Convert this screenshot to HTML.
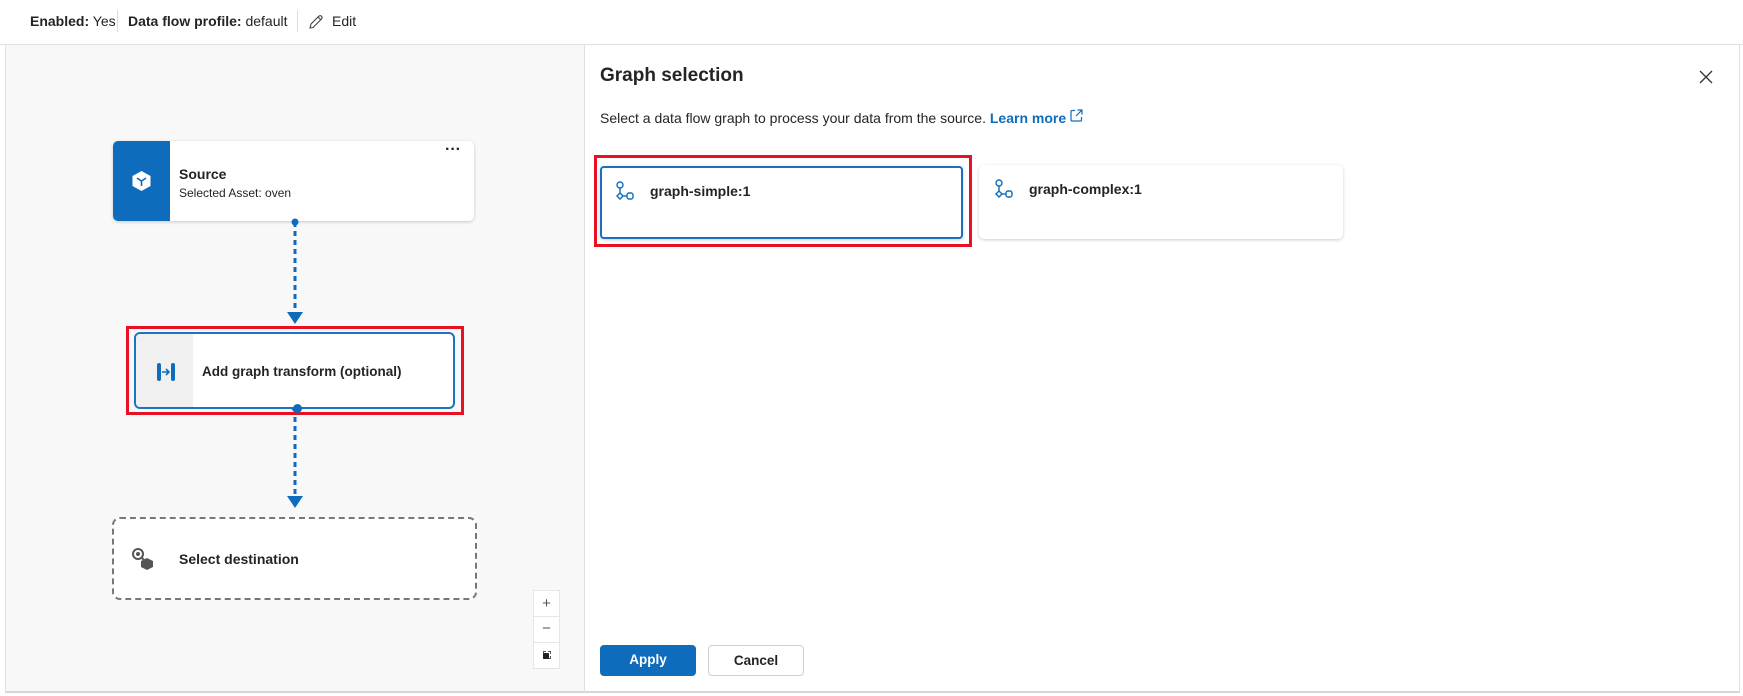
<!DOCTYPE html>
<html><head><meta charset="utf-8"><style>
*{box-sizing:border-box;margin:0;padding:0}
body{width:1743px;height:696px;background:#fff;font-family:"Liberation Sans",sans-serif;color:#242424;position:relative;overflow:hidden}
.abs{position:absolute}
.top{left:0;top:0;width:1743px;height:45px;border-bottom:1px solid #e0e0e0;font-size:14px}
.canvas{left:5px;top:45px;width:580px;height:648px;background:#f8f8f8;border-left:1px solid #e0e0e0;border-right:1px solid #e0e0e0;border-bottom:2px solid #d6d6d6}
.panel{left:585px;top:45px;width:1155px;height:648px;border-right:1px solid #e0e0e0;border-bottom:2px solid #d6d6d6}
.card{background:#fff;border-radius:5px;box-shadow:0 1px 3px rgba(0,0,0,.2)}
.btn{font-size:13.5px;font-weight:bold;border-radius:4px;text-align:center;line-height:30px}
</style></head><body>
<div class="abs top">
 <div class="abs" style="left:30px;top:13px"><b>Enabled:</b> Yes</div>
 <div class="abs" style="left:117px;top:10px;width:1px;height:22px;background:#ddd"></div>
 <div class="abs" style="left:128px;top:13px"><b>Data flow profile:</b> default</div>
 <div class="abs" style="left:297px;top:10px;width:1px;height:22px;background:#ddd"></div>
 <svg class="abs" style="left:307px;top:13px" width="18" height="18" viewBox="0 0 18 18"><path d="M3 15 L4 11 L12 3 Q14 2 15 4 Q15.5 5 14 6.5 L6 14.5 Z M11 4 L14 7" fill="none" stroke="#444" stroke-width="1.1"/></svg>
 <div class="abs" style="left:332px;top:13px">Edit</div>
</div>
<div class="abs canvas"></div>
<div class="abs card" style="left:113px;top:141px;width:361px;height:80px;overflow:hidden">
 <div class="abs" style="left:0;top:0;width:57px;height:80px;background:#0f6cbd"></div>
 <svg class="abs" style="left:18px;top:29px" width="21" height="22" viewBox="0 0 21 22"><path d="M10.5 1 L19.5 6 V16 L10.5 21 L1.5 16 V6 Z" fill="#fff"/><path d="M6 8 L10.5 11 L15 8 M10.5 11 V16" stroke="#0f6cbd" stroke-width="1.6" fill="none"/></svg>
 <div class="abs" style="left:66px;top:25px;font-size:14px;font-weight:bold">Source</div>
 <div class="abs" style="left:66px;top:45px;font-size:12px">Selected Asset: oven</div>
 <div class="abs" style="left:332px;top:0px;font-size:16px;font-weight:bold;letter-spacing:0px">···</div>
</div>
<svg class="abs" style="left:285px;top:216px" width="20" height="300" viewBox="0 0 20 300">
 <circle cx="10" cy="6" r="3.5" fill="#0f6cbd"/>
 <line x1="10" y1="6" x2="10" y2="100" stroke="#0f6cbd" stroke-width="3" stroke-dasharray="5,4"/>
 <path d="M2 96 L18 96 L10 108 Z" fill="#0f6cbd"/>
 <circle cx="10" cy="192" r="3.5" fill="#0f6cbd"/>
 <line x1="10" y1="192" x2="10" y2="282" stroke="#0f6cbd" stroke-width="3" stroke-dasharray="5,4"/>
 <path d="M2 280 L18 280 L10 292 Z" fill="#0f6cbd"/>
</svg>
<div class="abs" style="left:126px;top:326px;width:338px;height:89px;border:3px solid #e81123"></div>
<div class="abs" style="left:134px;top:332px;width:321px;height:77px;background:#fff;border:2px solid #1a73c4;border-radius:6px;overflow:hidden">
 <div class="abs" style="left:0;top:0;width:57px;height:77px;background:#f0f0f0"></div>
 <svg class="abs" style="left:20px;top:28px" width="22" height="20" viewBox="0 0 22 20"><rect x="1" y="1" width="4" height="18" rx="2" fill="#0f6cbd"/><rect x="15" y="1" width="4" height="18" rx="2" fill="#0f6cbd"/><path d="M6 10 H13 M10 7 L13 10 L10 13" stroke="#0f6cbd" stroke-width="1.6" fill="none"/></svg>
 <div class="abs" style="left:66px;top:30px;font-size:13.5px;font-weight:bold">Add graph transform (optional)</div>
</div>
<div class="abs" style="left:293px;top:404px;width:9px;height:9px;border-radius:50%;background:#0f6cbd"></div>
<div class="abs" style="left:112px;top:517px;width:365px;height:83px;background:#fff;border:2px dashed #777;border-radius:8px">
 <svg class="abs" style="left:17px;top:28px" width="24" height="24" viewBox="0 0 24 24"><circle cx="7" cy="7" r="5" fill="none" stroke="#555" stroke-width="2"/><circle cx="7" cy="7" r="2" fill="#555"/><path d="M10 10 L13 13" stroke="#555" stroke-width="2"/><path d="M16 11 L22 14 V20 L16 23 L10 20 V14 Z" fill="#555"/></svg>
 <div class="abs" style="left:65px;top:32px;font-size:14px;font-weight:bold">Select destination</div>
</div>
<div class="abs" style="left:533px;top:590px;width:27px;height:79px;background:#fff;border:1px solid #e6e6e6;font-size:15px;color:#555;text-align:center">
 <div style="height:26px;line-height:26px;border-bottom:1px solid #e6e6e6">+</div>
 <div style="height:26px;line-height:24px;border-bottom:1px solid #e6e6e6">−</div>
 <div style="height:25px;position:relative"><div class="abs" style="left:9px;top:8px;width:8px;height:8px;border:1px dashed #555"></div><div class="abs" style="left:9px;top:10px;width:6px;height:6px;background:#222;border-radius:1px"></div></div>
</div>
<div class="abs panel"></div>
<div class="abs" style="left:600px;top:65px;font-size:19px;font-weight:bold">Graph selection</div>
<svg class="abs" style="left:1699px;top:70px" width="14" height="14" viewBox="0 0 14 14"><path d="M1 1 L13 13 M13 1 L1 13" stroke="#333" stroke-width="1.3"/></svg>
<div class="abs" style="left:600px;top:110px;font-size:14px">Select a data flow graph to process your data from the source. <span style="color:#0f6cbd;font-weight:bold">Learn more</span></div>
<svg class="abs" style="left:1070px;top:109px" width="13" height="13" viewBox="0 0 13 13"><path d="M5 1.5 H2 Q1 1.5 1 2.5 V11 Q1 12 2 12 H10.5 Q11.5 12 11.5 11 V8 M7.5 1 H12 V5.5 M12 1 L6 7" fill="none" stroke="#0f6cbd" stroke-width="1.2"/></svg>
<div class="abs" style="left:594px;top:155px;width:378px;height:92px;border:3px solid #e81123"></div>
<div class="abs card" style="left:600px;top:166px;width:363px;height:73px;border:2px solid #1a6fc0;border-radius:4px"></div>
<div class="abs card" style="left:979px;top:165px;width:364px;height:74px"></div>
<svg class="abs" style="left:615px;top:181px" width="20" height="22" viewBox="0 0 20 22"><circle cx="5" cy="4" r="3" fill="none" stroke="#0f6cbd" stroke-width="1.4"/><path d="M5 7 V12" stroke="#0f6cbd" stroke-width="1.4"/><path d="M5 12 L8 15 L5 18 L2 15 Z" fill="none" stroke="#0f6cbd" stroke-width="1.4"/><path d="M8 15 H12" stroke="#0f6cbd" stroke-width="1.4"/><rect x="12" y="12" width="6" height="6" rx="2" fill="none" stroke="#0f6cbd" stroke-width="1.4"/></svg>
<div class="abs" style="left:650px;top:183px;font-size:14px;font-weight:bold">graph-simple:1</div>
<svg class="abs" style="left:994px;top:179px" width="20" height="22" viewBox="0 0 20 22"><circle cx="5" cy="4" r="3" fill="none" stroke="#0f6cbd" stroke-width="1.4"/><path d="M5 7 V12" stroke="#0f6cbd" stroke-width="1.4"/><path d="M5 12 L8 15 L5 18 L2 15 Z" fill="none" stroke="#0f6cbd" stroke-width="1.4"/><path d="M8 15 H12" stroke="#0f6cbd" stroke-width="1.4"/><rect x="12" y="12" width="6" height="6" rx="2" fill="none" stroke="#0f6cbd" stroke-width="1.4"/></svg>
<div class="abs" style="left:1029px;top:181px;font-size:14px;font-weight:bold">graph-complex:1</div>
<div class="abs btn" style="left:600px;top:645px;width:96px;height:31px;background:#0f6cbd;color:#fff">Apply</div>
<div class="abs btn" style="left:708px;top:645px;width:96px;height:31px;border:1px solid #d1d1d1;background:#fff">Cancel</div>
</body></html>
